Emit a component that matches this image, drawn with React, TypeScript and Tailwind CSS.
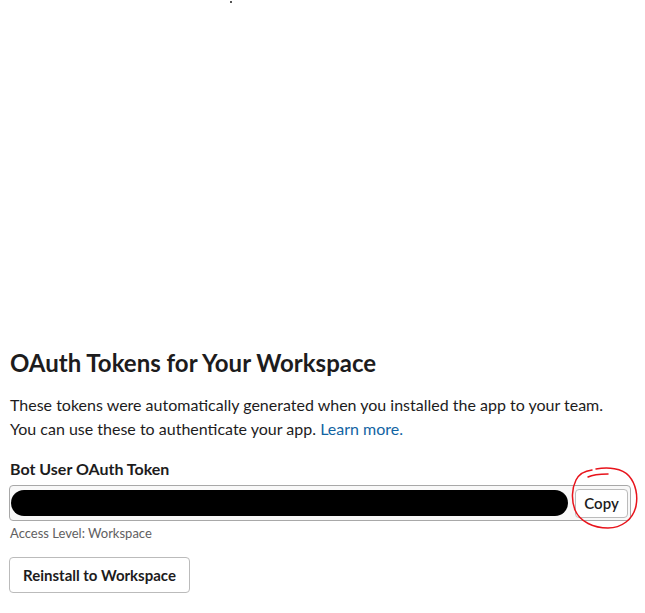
const App = () => {
  return (
    <div className="relative min-h-screen bg-white font-['Lato','Liberation_Sans',sans-serif] text-[#1d1c1d]">
      <span className="absolute left-[230px] top-[1px] h-[2px] w-[2px] bg-[#555]" />
      <svg
        className="pointer-events-none absolute left-[566px] top-[464px] z-10"
        width="76"
        height="70"
        viewBox="0 0 76 70"
        fill="none"
        stroke="#e8141c"
        strokeWidth="1.5"
        strokeLinecap="round"
      >
        <path d="M22 13 C26 11 32 10 42 10" />
        <path d="M30 5 C42 3 56 4 63 12 C70 20 72 32 70 42 C67 56 55 64 42 64 C28 64 14 58 9 46 C5 36 6 24 10 16 C13 10 18 7 26 6" />
      </svg>
      <section className="px-[10px] pt-[348px]">
        <h2 className="text-[24px] font-bold leading-[30px]">
          OAuth Tokens for Your Workspace
        </h2>
        <p className="mt-[15px] text-[16px] leading-[24px]">
          These tokens were automatically generated when you installed the app
          to your team.
          <br />
          You can use these to authenticate your app.{" "}
          <a href="#" className="text-[#1264a3]">
            Learn more.
          </a>
        </p>
        <div className="mt-[17px] text-[16px] font-bold leading-[22px]">
          Bot User OAuth Token
        </div>
        <div className="mt-[5px] ml-[-1px] flex h-[36px] w-[622px] items-center rounded-[4px] border border-[#a8a8a8] bg-[#f8f8f8] pl-[1px] pr-[2px]">
          <div className="h-[26px] flex-1 rounded-full bg-black" />
          <button className="ml-[7px] h-[29px] w-[53px] rounded-[4px] border border-[#bbbbbb] bg-white text-[15px] font-semibold leading-none">
            Copy
          </button>
        </div>
        <div className="mt-[3px] text-[13px] leading-[18px] text-[#616061]">
          Access Level: Workspace
        </div>
        <button className="mt-[15px] ml-[-1px] h-[36px] w-[181px] rounded-[4px] border border-[#bbbbbb] bg-white text-[15px] font-bold">
          Reinstall to Workspace
        </button>
      </section>
    </div>
  );
};

export default App;
